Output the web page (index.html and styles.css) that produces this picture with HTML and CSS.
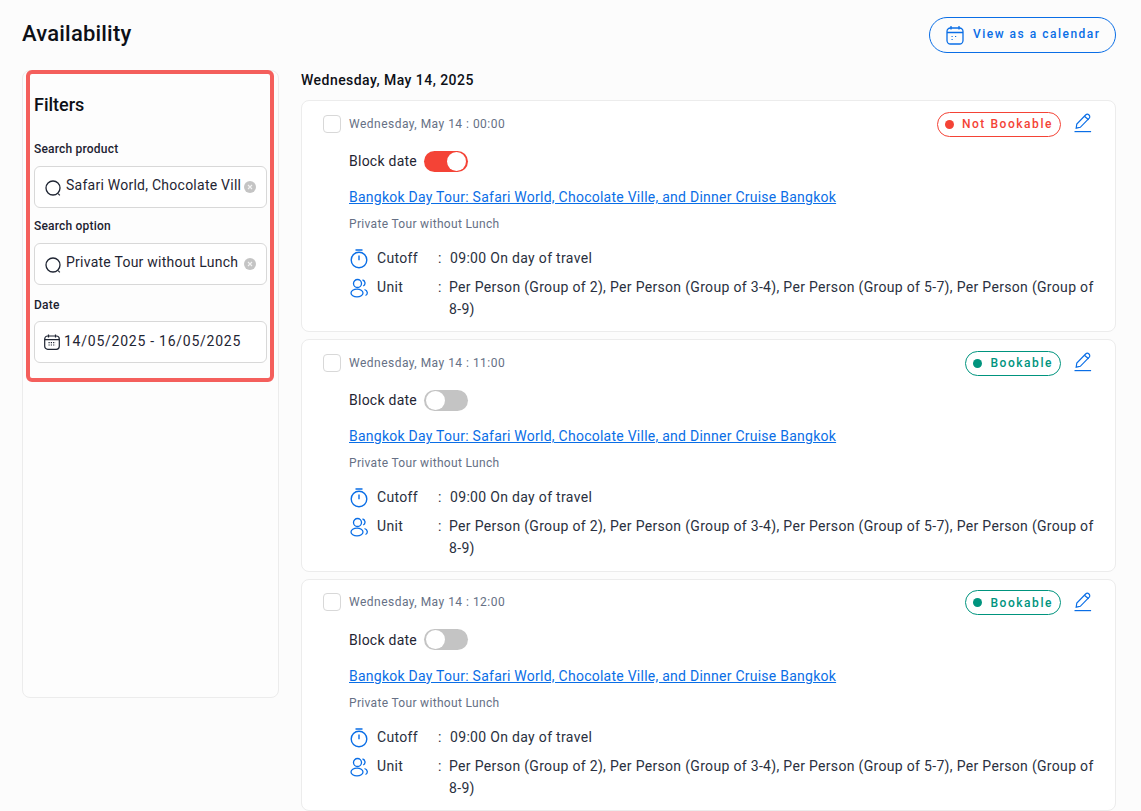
FILE: index.html
```html
<!DOCTYPE html>
<html lang="en">
<head>
<meta charset="utf-8">
<title>Availability</title>
<link rel="stylesheet" href="styles.css">
</head>
<body>
<svg class="defs" width="0" height="0" aria-hidden="true">
  <defs>
    <symbol id="i-search" viewBox="0 0 17 17"><circle cx="8" cy="8" r="7" fill="none" stroke="currentColor" stroke-width="1.3"/><path d="M13.2 13.6l1.6 1.7" fill="none" stroke="currentColor" stroke-width="1.2"/></symbol>
    <symbol id="i-clear" viewBox="0 0 12 12"><circle cx="6" cy="6" r="6" fill="#c4c4c4"/><path d="M4 4l4 4M8 4l-4 4" stroke="#f2f2f2" stroke-width="1.1"/></symbol>
    <symbol id="i-cal" viewBox="0 0 18 20"><rect x="1" y="3" width="16" height="16" rx="3.5" fill="none" stroke="currentColor" stroke-width="1.3"/><path d="M1 7.5h16M5 1v3.5M13 1v3.5" fill="none" stroke="currentColor" stroke-width="1.3"/><path d="M5.5 11.5h1.2M9 11.5h1.2M5.5 14.5h1.2" stroke="currentColor" stroke-width="1.1"/></symbol>
    <symbol id="i-cal-d" viewBox="0 0 16 16"><rect x=".7" y="2" width="14.6" height="13.3" rx="3" fill="none" stroke="currentColor" stroke-width="1.2"/><path d="M.7 5.6h14.6M4.5 .5v3M11.5 .5v3" fill="none" stroke="currentColor" stroke-width="1.2"/><path d="M4.5 8.6h7M4.5 11h7" stroke="currentColor" stroke-width="1.2" stroke-dasharray="1.2 1.1"/></symbol>
    <symbol id="i-edit" viewBox="0 0 18 20"><path d="M2.2 15.2l.6-4.2L11.6 2c1-1 2.4-1 3.4 0s1 2.4 0 3.4L6.3 14.3z" fill="none" stroke="currentColor" stroke-width="1.2"/><path d="M10.4 3.3l4.2 3.5" fill="none" stroke="currentColor" stroke-width="1.2"/><path d="M.5 18.6h16.6" stroke="currentColor" stroke-width="1.2"/></symbol>
    <symbol id="i-timer" viewBox="0 0 18 20"><circle cx="9" cy="11" r="7.8" fill="none" stroke="currentColor" stroke-width="1.4"/><path d="M5.5 1h7M9 6.5v4.8" fill="none" stroke="currentColor" stroke-width="1.4"/></symbol>
    <symbol id="i-users" viewBox="0 0 18 20"><circle cx="7.5" cy="5.5" r="4" fill="none" stroke="currentColor" stroke-width="1.3"/><ellipse cx="7" cy="15" rx="6" ry="3.8" fill="none" stroke="currentColor" stroke-width="1.3"/><path d="M12.5 2c2.8.4 3.5 4.5.8 6M14.5 11.500c3.400 1 3.600 4.800 1 6" fill="none" stroke="currentColor" stroke-width="1.3"/></symbol>
  </defs>
</svg>
<div class="page">
  <header class="topbar">
    <h1 class="title">Availability</h1>
    <a class="cal-btn"><svg class="ic-cal"><use href="#i-cal"/></svg><span>View as a calendar</span></a>
  </header>
  <div class="layout">
    <aside class="sidebar">
      <div class="highlight"></div>
      <h2 class="filters">Filters</h2>
      <label class="flabel flabel-first">Search product</label>
      <div class="field"><svg class="ic-search"><use href="#i-search"/></svg><span class="fval">Safari World, Chocolate Vill</span><svg class="ic-clear"><use href="#i-clear"/></svg></div>
      <label class="flabel">Search option</label>
      <div class="field"><svg class="ic-search"><use href="#i-search"/></svg><span class="fval">Private Tour without Lunch</span><svg class="ic-clear"><use href="#i-clear"/></svg></div>
      <label class="flabel flabel-date">Date</label>
      <div class="field field-date"><svg class="ic-cal-d"><use href="#i-cal-d"/></svg><span class="fdate">14/05/2025 - 16/05/2025</span></div>
    </aside>
    <main class="main">
      <h3 class="day">Wednesday, May 14, 2025</h3>

      <article class="card">
        <div class="card-top">
          <span class="check"></span><span class="when">Wednesday, May 14 : 00:00</span>
          <span class="badge badge-no"><i class="dot"></i>Not Bookable</span>
          <svg class="ic-edit"><use href="#i-edit"/></svg>
        </div>
        <div class="body">
          <div class="block">Block date<span class="toggle on"><i></i></span></div>
          <a class="link">Bangkok Day Tour: Safari World, Chocolate Ville, and Dinner Cruise Bangkok</a>
          <div class="opt">Private Tour without Lunch</div>
          <div class="row row-cut"><svg class="ic-row"><use href="#i-timer"/></svg><span class="k">Cutoff</span><span class="c">:</span><span class="v">09:00 On day of travel</span></div>
          <div class="row row-unit"><svg class="ic-row"><use href="#i-users"/></svg><span class="k">Unit</span><span class="c">:</span><span class="v">Per Person (Group of 2), Per Person (Group of 3-4), Per Person (Group of 5-7), Per Person (Group of 8-9)</span></div>
        </div>
      </article>

      <article class="card">
        <div class="card-top">
          <span class="check"></span><span class="when">Wednesday, May 14 : 11:00</span>
          <span class="badge badge-yes"><i class="dot"></i>Bookable</span>
          <svg class="ic-edit"><use href="#i-edit"/></svg>
        </div>
        <div class="body">
          <div class="block">Block date<span class="toggle"><i></i></span></div>
          <a class="link">Bangkok Day Tour: Safari World, Chocolate Ville, and Dinner Cruise Bangkok</a>
          <div class="opt">Private Tour without Lunch</div>
          <div class="row row-cut"><svg class="ic-row"><use href="#i-timer"/></svg><span class="k">Cutoff</span><span class="c">:</span><span class="v">09:00 On day of travel</span></div>
          <div class="row row-unit"><svg class="ic-row"><use href="#i-users"/></svg><span class="k">Unit</span><span class="c">:</span><span class="v">Per Person (Group of 2), Per Person (Group of 3-4), Per Person (Group of 5-7), Per Person (Group of 8-9)</span></div>
        </div>
      </article>

      <article class="card">
        <div class="card-top">
          <span class="check"></span><span class="when">Wednesday, May 14 : 12:00</span>
          <span class="badge badge-yes"><i class="dot"></i>Bookable</span>
          <svg class="ic-edit"><use href="#i-edit"/></svg>
        </div>
        <div class="body">
          <div class="block">Block date<span class="toggle"><i></i></span></div>
          <a class="link">Bangkok Day Tour: Safari World, Chocolate Ville, and Dinner Cruise Bangkok</a>
          <div class="opt">Private Tour without Lunch</div>
          <div class="row row-cut"><svg class="ic-row"><use href="#i-timer"/></svg><span class="k">Cutoff</span><span class="c">:</span><span class="v">09:00 On day of travel</span></div>
          <div class="row row-unit"><svg class="ic-row"><use href="#i-users"/></svg><span class="k">Unit</span><span class="c">:</span><span class="v">Per Person (Group of 2), Per Person (Group of 3-4), Per Person (Group of 5-7), Per Person (Group of 8-9)</span></div>
        </div>
      </article>
    </main>
  </div>
</div>
</body>
</html>
```
FILE: styles.css
```css
* { box-sizing: border-box; }
html, body { margin: 0; height: 100%; overflow: hidden; }
body { background: #fcfcfc; color: #1f2533; font-family: Roboto, "Noto Sans", sans-serif; font-size: 14px; letter-spacing: .25px; }
.defs { position: absolute; }
.page { padding: 17px 25px 0 22px; }
.topbar { display: flex; justify-content: space-between; align-items: center; height: 36px; }
.title { margin: 0 0 3px; font-size: 22px; line-height: 28px; font-weight: 500; color: #0d1017; letter-spacing: .2px; }
.cal-btn { display: flex; align-items: center; width: 187px; height: 36px; padding-left: 16px; border: 1px solid #0a6ee6; border-radius: 18px; color: #0a6ee6; font-size: 12px; font-weight: 500; letter-spacing: 1.5px; }
.cal-btn span { margin-top: -2px; }
.ic-cal { width: 18px; height: 20px; margin-right: 9px; }
.layout { display: flex; gap: 22px; margin-top: 17px; align-items: flex-start; }
.sidebar { position: relative; width: 257px; height: 628px; flex: none; background: #fdfdfd; border: 1px solid #ececec; border-radius: 8px; padding: 0 11px; }
.highlight { position: absolute; left: 3px; top: -1px; width: 248px; height: 312px; border: 4px solid #f45f5c; border-radius: 6px; pointer-events: none; }
.filters { margin: 22px 0 0; font-size: 18px; line-height: 24px; font-weight: 500; color: #0d1017; letter-spacing: 0; }
.flabel { display: block; font-size: 12px; line-height: 18px; font-weight: 500; color: #1c2230; letter-spacing: .2px; margin: 9px 0 8px; }
.flabel-first { margin-top: 23px; }
.flabel-date { margin-top: 11px; margin-bottom: 7px; }
.field { display: flex; align-items: center; height: 42px; background: #fff; border: 1px solid #d8d8d8; border-radius: 6px; padding-left: 10px; width: 233px; }
.ic-search { width: 17px; height: 17px; flex: none; color: #1f2533; margin-top: 2px; }
.fval { margin-left: 4px; width: 175px; white-space: nowrap; flex: none; margin-top: -5px; }
.ic-clear { width: 12px; height: 12px; flex: none; margin-left: 3px; margin-top: -1px; }
.field-date { padding-left: 9px; }
.ic-cal-d { width: 16px; height: 16px; color: #1f2533; flex: none; }
.fdate { margin-left: 4px; letter-spacing: .75px; white-space: nowrap; margin-top: -3px; }
.main { flex: 1; min-width: 0; }
.day { margin: 0 0 10px; font-size: 14px; line-height: 20px; font-weight: 500; color: #0d1017; letter-spacing: .46px; }
.card { position: relative; background: #fff; border: 1px solid #ececec; border-radius: 8px; height: 232.3px; margin-bottom: 7px; padding: 0 21px; }
.card-top { display: flex; align-items: center; height: 47px; padding-bottom: 2px; }
.check { width: 18px; height: 18px; border: 1px solid #d8d8d8; border-radius: 4px; margin-right: 8px; flex: none; }
.when { font-size: 12px; color: #667085; flex: 1; letter-spacing: .48px; }
.badge { display: flex; align-items: center; height: 25px; border: 1px solid; border-radius: 13px; padding: 0 7px; font-size: 12px; font-weight: 500; letter-spacing: 1.55px; margin-top: 1px; }
.badge-no { color: #f44336; border-color: #f44336; }
.badge-yes { color: #00947e; border-color: #00947e; }
.dot { width: 9px; height: 9px; border-radius: 50%; background: currentColor; margin-right: 8px; }
.ic-edit { width: 18px; height: 20px; color: #0a6ee6; margin-left: 13px; margin-right: 2px; margin-top: -1px; flex: none; }
.body { padding-left: 26px; }
.block { display: flex; align-items: center; height: 22px; margin-top: 2px; color: #1f2533; }
.toggle { position: relative; width: 44px; height: 21px; border-radius: 11px; background: #c4c4c4; margin-left: 7px; }
.toggle i { position: absolute; left: 2px; top: 1px; width: 19px; height: 19px; border-radius: 50%; background: #fff; }
.toggle.on { background: #f44336; }
.toggle.on i { left: 23px; }
.link { display: block; margin-top: 14px; line-height: 22px; color: #0a6ee6; text-decoration: underline; white-space: nowrap; }
.opt { margin-top: 6px; font-size: 12px; line-height: 20px; color: #667085; letter-spacing: .32px; }
.row { display: flex; align-items: flex-start; line-height: 22px; color: #2a3040; letter-spacing: .32px; }
.row-cut { margin-top: 13px; }
.row-unit { margin-top: 7px; }
.ic-row { width: 18px; height: 20px; color: #0a6ee6; flex: none; margin-top: 2px; margin-left: 1px; }
.k { width: 61px; flex: none; margin-left: 9px; }
.c { width: 11px; flex: none; }
.row-cut .c { width: 12px; }
.v { flex: 1; }
```
